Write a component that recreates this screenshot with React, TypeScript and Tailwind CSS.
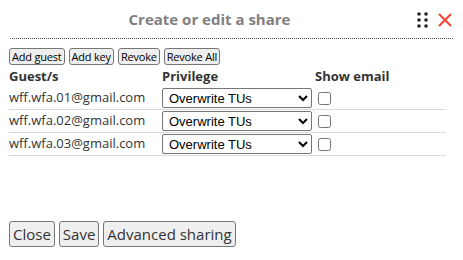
import React from "react";

const guests = ["wff.wfa.01@gmail.com", "wff.wfa.02@gmail.com", "wff.wfa.03@gmail.com"];

const smallBtn =
  "h-[17px] px-[2px] text-[11px] tracking-[-0.2px] leading-none bg-[#efefef] border border-[#767676] rounded-[3px] text-black";
const bigBtn =
  "h-[26px] px-[3px] text-[15px] leading-none bg-[#efefef] border border-[#767676] rounded-[3px] text-[#333]";

function DragDots() {
  return (
    <svg width="12" height="16" viewBox="0 0 12 16" className="fill-[#222]">
      {[2, 8, 14].map((y) =>
        [2, 9].map((x) => <circle key={`${x}-${y}`} cx={x} cy={y} r="1.8" />)
      )}
    </svg>
  );
}

function CloseX() {
  return (
    <svg width="16" height="16" viewBox="0 0 16 16" className="stroke-[#f44336]" strokeWidth="2">
      <path d="M2 2 L14 14 M14 2 L2 14" />
    </svg>
  );
}

export default function App() {
  return (
    <div className="w-[463px] h-[260px] bg-white font-['Open_Sans',sans-serif] text-[#333] overflow-hidden">
      {/* Header */}
      <div className="relative h-[39px] mx-[10px] border-b border-dotted border-[#555] flex items-center justify-center">
        <span className="font-bold text-[15px] text-[#808080] -ml-[44px]">Create or edit a share</span>
        <div className="absolute right-[0px] top-[12px] flex items-center gap-[8px]">
          <DragDots />
          <CloseX />
        </div>
      </div>

      {/* Actions */}
      <div className="flex gap-[4px] px-[9px] mt-[9px]">
        <button className={smallBtn}>Add guest</button>
        <button className={smallBtn}>Add key</button>
        <button className={smallBtn}>Revoke</button>
        <button className={smallBtn}>Revoke All</button>
      </div>

      {/* Table */}
      <div className="px-[9px] mt-[1px] w-[455px] text-[13px]">
        <div className="flex h-[21px] items-center font-bold">
          <div className="w-[153px]">Guest/s</div>
          <div className="w-[153px]">Privilege</div>
          <div>Show email</div>
        </div>
        {guests.map((g) => (
          <div key={g} className="flex h-[23px] items-center border-b border-[#d9d9d9]">
            <div className="w-[153px]">{g}</div>
            <div className="w-[153px]">
              <select className="w-[150px] h-[20px] border border-[#767676] rounded-[2px] bg-white text-[13px] text-black font-['Liberation_Sans',sans-serif] px-[2px]">
                <option>Overwrite TUs</option>
              </select>
            </div>
            <input type="checkbox" className="w-[13px] h-[13px] ml-[3px]" />
          </div>
        ))}
      </div>

      {/* Footer */}
      <div className="flex gap-[4px] px-[9px] mt-[65px]">
        <button className={bigBtn}>Close</button>
        <button className={bigBtn}>Save</button>
        <button className={bigBtn}>Advanced sharing</button>
      </div>
    </div>
  );
}
